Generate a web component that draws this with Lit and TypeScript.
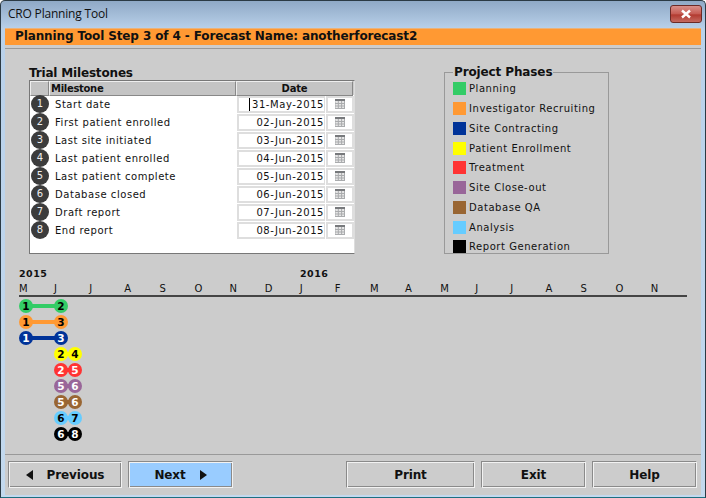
import {css, html, LitElement} from "lit";
import {customElement} from "lit/decorators.js";

interface Phase {
  name: string;
  color: string;
  ink: string;
  from: number;
  to: number;
  start: number; // px from chart left, first pin centre
  end: number;
}

const MILESTONES = [
  ["Start date", "31-May-2015"],
  ["First patient enrolled", "02-Jun-2015"],
  ["Last site initiated", "03-Jun-2015"],
  ["Last patient enrolled", "04-Jun-2015"],
  ["Last patient complete", "05-Jun-2015"],
  ["Database closed", "06-Jun-2015"],
  ["Draft report", "07-Jun-2015"],
  ["End report", "08-Jun-2015"],
];

const PHASES: Phase[] = [
  {name: "Planning", color: "#33cc66", ink: "#000", from: 1, to: 2, start: 7, end: 42},
  {name: "Investigator Recruiting", color: "#ff9933", ink: "#000", from: 1, to: 3, start: 7, end: 42},
  {name: "Site Contracting", color: "#003399", ink: "#fff", from: 1, to: 3, start: 7, end: 42},
  {name: "Patient Enrollment", color: "#ffff00", ink: "#000", from: 2, to: 4, start: 42, end: 56},
  {name: "Treatment", color: "#ff3333", ink: "#fff", from: 2, to: 5, start: 42, end: 56},
  {name: "Site Close-out", color: "#996699", ink: "#fff", from: 5, to: 6, start: 42, end: 56},
  {name: "Database QA", color: "#996633", ink: "#fff", from: 5, to: 6, start: 42, end: 56},
  {name: "Analysis", color: "#66ccff", ink: "#000", from: 6, to: 7, start: 42, end: 56},
  {name: "Report Generation", color: "#000000", ink: "#fff", from: 6, to: 8, start: 42, end: 56},
];

const MONTHS = ["M", "J", "J", "A", "S", "O", "N", "D", "J", "F", "M", "A", "M", "J", "J", "A", "S", "O", "N"];

@customElement("app-root")
export class AppRoot extends LitElement {
  static styles = css`
    :host {
      display: block;
      width: 706px;
      height: 498px;
      font-family: "DejaVu Sans", sans-serif;
      font-size: 10px;
      letter-spacing: 0.55px;
      color: #111;
    }

    .window {
      box-sizing: border-box;
      width: 706px;
      height: 498px;
      padding: 0 4px 2px 4px;
      display: flex;
      flex-direction: column;
      border: 1px solid #2b3a44;
      border-bottom-color: #1d6f80;
      border-radius: 5px 5px 0 0;
      background: linear-gradient(#8fa9c6 0, #b9d1ea 28px, #c3d9ee 100%);
    }

    .titlebar {
      flex: none;
      height: 27px;
      display: flex;
      justify-content: space-between;
      align-items: flex-start;
    }

    .title {
      margin: 5px 0 0 3px;
      font-family: "Open Sans", sans-serif;
      font-size: 12px;
      letter-spacing: -0.2px;
      line-height: 16px;
      color: #111;
    }

    .close {
      box-sizing: border-box;
      width: 32px;
      height: 18px;
      margin: 4px -1px 0 0;
      border: 1px solid #6b2a26;
      border-radius: 3px;
      background: linear-gradient(#d9908a, #c65b52 50%, #b23a30 55%, #c4695f);
      display: flex;
      align-items: center;
      justify-content: center;
    }

    .client {
      flex: 1;
      display: flex;
      flex-direction: column;
      min-height: 0;
      background: #cccccc;
    }

    .banner {
      flex: none;
      height: 17px;
      padding-left: 10px;
      background: #ff9933;
      font-size: 12px;
      font-weight: bold;
      line-height: 15px;
      letter-spacing: -0.12px;
      color: #111;
      border-top: 1px solid #e9b27c;
      box-sizing: border-box;
    }

    .rule {
      flex: none;
      height: 1px;
      margin: 3px 0 0 0;
      background: #999;
    }

    .top {
      flex: none;
      height: 207px;
      display: flex;
      padding: 16px 0 0 24px;
      box-sizing: border-box;
    }

    .milestones {
      width: 326px;
      flex: none;
    }

    .section-title {
      font-size: 12px;
      font-weight: bold;
      line-height: 14px;
      letter-spacing: -0.17px;
      margin-top: 1px;
    }

    .table {
      box-sizing: border-box;
      height: 174px;
      background: #fff;
      border: 1px solid #777;
      border-right-color: #ddd;
      border-bottom-color: #777;
    }

    .thead {
      height: 14px;
      display: grid;
      grid-template-columns: 19px 187px 117px;
      background: #ccc;
      font-weight: bold;
      line-height: 13px;
      font-size: 10px;
    }

    .th {
      box-sizing: border-box;
      border: 1px solid #888;
      border-top-color: #eee;
      border-left-color: #eee;
      background: #c4c4c4;
    }

    .th.date {
      text-align: center;
      letter-spacing: -0.2px;
    }

    .th.name {
      padding-left: 1px;
      letter-spacing: -0.3px;
    }

    .row {
      height: 18px;
      display: flex;
      align-items: center;
    }

    .num {
      flex: none;
      width: 18px;
      height: 18px;
      margin-left: 1px;
      border-radius: 50%;
      background: #3c3c3c;
      color: #eee;
      text-align: center;
      line-height: 18px;
      letter-spacing: 0;
    }

    .label {
      flex: none;
      width: 182px;
      margin-left: 6px;
      white-space: nowrap;
    }

    .date-cell {
      box-sizing: border-box;
      flex: none;
      width: 88px;
      height: 17px;
      border: 2px solid #dedede;
      border-right-width: 1px;
      text-align: right;
      line-height: 13px;
      white-space: nowrap;
      position: relative;
    }

    .caret {
      position: absolute;
      left: 10px;
      top: 0;
      width: 1px;
      height: 13px;
      background: #000;
    }

    .cal {
      box-sizing: border-box;
      flex: none;
      width: 28px;
      height: 17px;
      margin-left: 1px;
      border: 2px solid #dedede;
      display: flex;
      align-items: center;
      justify-content: center;
    }

    fieldset.phases {
      box-sizing: border-box;
      width: 165px;
      height: 189px;
      margin: 0 0 0 89px;
      padding: 0 0 0 8px;
      border: 1px solid #999;
    }

    fieldset.phases legend {
      padding: 0 1px;
      margin-left: 0;
      font-size: 12px;
      font-weight: bold;
      line-height: 14px;
      letter-spacing: -0.12px;
    }

    .phase {
      height: 19.75px;
      display: flex;
      align-items: center;
      white-space: nowrap;
    }

    .swatch {
      flex: none;
      width: 13px;
      height: 13px;
      margin-right: 3px;
    }

    .chart {
      flex: none;
      padding-left: 14px;
      height: 167px;
      box-sizing: border-box;
      padding-top: 12px;
    }

    .years {
      position: relative;
      height: 14px;
      font-weight: bold;
      font-size: 9.5px;
      line-height: 12px;
      letter-spacing: 0.5px;
    }

    .year-2016 {
      position: absolute;
      left: 281px;
      top: 0;
    }

    .months {
      display: flex;
      height: 13px;
      width: 668px;
      line-height: 13px;
    }

    .month {
      flex: none;
      width: 35.1px;
    }

    .axis {
      width: 668px;
      height: 2px;
      background: #444;
    }

    .lanes {
      padding-top: 1px;
    }

    .lane {
      position: relative;
      height: 16px;
    }

    .bar {
      position: absolute;
      top: 6px;
      height: 4px;
    }

    .pin {
      position: absolute;
      top: 1px;
      width: 14px;
      height: 14px;
      margin-left: -7px;
      border-radius: 50%;
      text-align: center;
      font-weight: bold;
      font-size: 10.5px;
      line-height: 14px;
      letter-spacing: 0;
    }

    .footer {
      flex: none;
      margin-top: auto;
      border-top: 1px solid #999;
      height: 41px;
      box-sizing: border-box;
      padding: 6px 4px 0 3px;
      display: flex;
    }

    .btn {
      box-sizing: border-box;
      height: 27px;
      background: #cccccc;
      border: 1px solid #8a8a8a;
      border-right-color: #f2f2f2;
      border-bottom-color: #f2f2f2;
      box-shadow: inset 1px 1px 0 #f2f2f2, inset -1px -1px 0 #8a8a8a;
      font-family: "DejaVu Sans", sans-serif;
      font-size: 12px;
      font-weight: bold;
      letter-spacing: -0.12px;
      color: #111;
      display: flex;
      align-items: center;
      justify-content: center;
      padding: 0;
    }

    .btn.next {
      background: #99ccff;
      gap: 14px;
      width: 105px;
      margin-left: 6px;
    }

    .btn.prev {
      width: 114px;
      gap: 14px;
    }

    .btn.print {
      width: 129px;
      margin-left: 113px;
    }

    .btn.exit,
    .btn.help {
      width: 105px;
      margin-left: 6px;
    }
  `;

  private calIcon() {
    return html`<svg width="10" height="10" viewBox="0 0 10 10">
      <rect width="10" height="10" fill="#e6e6e6"/>
      <rect width="10" height="2" fill="#77797c"/>
      <path d="M0 2.5V10M3.3 2V10M6.6 2V10M9.5 2V10M0 4.5H10M0 7H10M0 9.5H10" stroke="#a9abad" stroke-width="1"/>
    </svg>`;
  }

  private renderMilestone(m: string[], i: number) {
    return html`
      <div class="row">
        <div class="num">${i + 1}</div>
        <div class="label">${m[0]}</div>
        <div class="date-cell">${i === 0 ? html`<span class="caret"></span>` : ""}${m[1]}</div>
        <div class="cal">${this.calIcon()}</div>
      </div>
    `;
  }

  private renderLane(p: Phase) {
    const pinStyle = (x: number) => `left:${x}px;background:${p.color};color:${p.ink}`;
    return html`
      <div class="lane">
        <div class="bar" style="left:${p.start}px;width:${p.end - p.start}px;background:${p.color}"></div>
        <div class="pin" style=${pinStyle(p.start)}>${p.from}</div>
        <div class="pin" style=${pinStyle(p.end)}>${p.to}</div>
      </div>
    `;
  }

  render() {
    return html`
      <div class="window">
        <div class="titlebar">
          <div class="title">CRO Planning Tool</div>
          <div class="close">
            <svg width="12" height="10" viewBox="0 0 12 10">
              <path d="M2 1.5L10 8.5M10 1.5L2 8.5" stroke="#fff" stroke-width="2.4"/>
            </svg>
          </div>
        </div>
        <div class="client">
          <div class="banner">Planning Tool Step 3 of 4 - Forecast Name: anotherforecast2</div>
          <div class="rule"></div>
          <div class="top">
            <div class="milestones">
              <div class="section-title">Trial Milestones</div>
              <div class="table">
                <div class="thead">
                  <div class="th"></div>
                  <div class="th name">Milestone</div>
                  <div class="th date">Date</div>
                </div>
                ${MILESTONES.map((m, i) => this.renderMilestone(m, i))}
              </div>
            </div>
            <fieldset class="phases">
              <legend>Project Phases</legend>
              ${PHASES.map(
                (p) => html`
                  <div class="phase">
                    <div class="swatch" style="background:${p.color}"></div>
                    ${p.name}
                  </div>
                `
              )}
            </fieldset>
          </div>
          <div class="chart">
            <div class="years">2015<span class="year-2016">2016</span></div>
            <div class="months">
              ${MONTHS.map((m) => html`<div class="month">${m}</div>`)}
            </div>
            <div class="axis"></div>
            <div class="lanes">${PHASES.map((p) => this.renderLane(p))}</div>
          </div>
          <div class="footer">
            <button class="btn prev">
              <svg width="7" height="10" viewBox="0 0 7 10"><path d="M7 0V10L0 5Z" fill="#111"/></svg>
              Previous
            </button>
            <button class="btn next">
              Next
              <svg width="7" height="10" viewBox="0 0 7 10"><path d="M0 0V10L7 5Z" fill="#111"/></svg>
            </button>
            <button class="btn print">Print</button>
            <button class="btn exit">Exit</button>
            <button class="btn help">Help</button>
          </div>
        </div>
      </div>
    `;
  }
}
